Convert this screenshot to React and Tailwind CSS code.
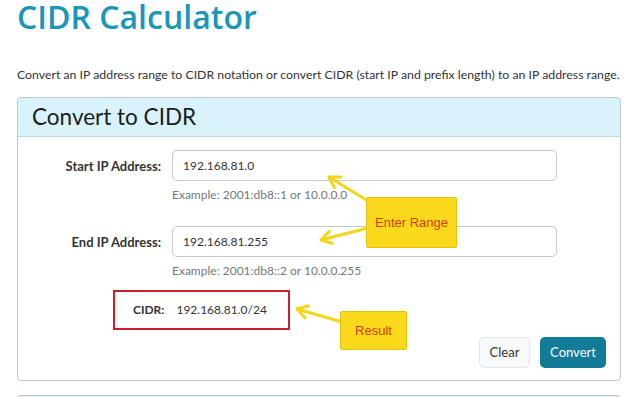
import React from "react";

const body = { fontFamily: 'Lato, "Open Sans", sans-serif' };
const heading = { fontFamily: '"Open Sans", "Noto Sans", sans-serif' };
const annot = { fontFamily: '"Liberation Sans", Arial, sans-serif' };

function Arrow({ x1, y1, x2, y2 }) {
  // arrow head at (x2, y2)
  const ang = Math.atan2(y1 - y2, x1 - x2);
  const len = 12;
  const spread = 0.55;
  const a = [x2 + len * Math.cos(ang + spread), y2 + len * Math.sin(ang + spread)];
  const b = [x2 + len * Math.cos(ang - spread), y2 + len * Math.sin(ang - spread)];
  return (
    <g stroke="#f2d61c" strokeWidth="3" fill="none" strokeLinecap="round" strokeLinejoin="round">
      <line x1={x1} y1={y1} x2={x2} y2={y2} />
      <polyline points={`${a[0]},${a[1]} ${x2},${y2} ${b[0]},${b[1]}`} />
    </g>
  );
}

function Field({ label, value, example }) {
  return (
    <div className="flex items-start">
      <label className="w-[154px] shrink-0 pr-[11px] pt-[7px] text-right text-[13px] font-bold text-[#333]">
        {label}
      </label>
      <div>
        <div className="flex h-[31px] w-[385px] items-center rounded-[5px] border border-[#c8c8c8] bg-white px-[10px] text-[12px] text-[#333]">
          {value}
        </div>
        <p className="mt-[5px] text-[12px] leading-[18px] text-[#777]">{example}</p>
      </div>
    </div>
  );
}

export default function App() {
  return (
    <div className="relative h-[397px] w-[640px] overflow-hidden bg-white" style={body}>
      <div className="pl-[17px]">
        {/* title */}
        <h1 className="mt-[1px] text-[32px] font-semibold leading-[32px] text-[#1a96b9]" style={heading}>
          CIDR Calculator
        </h1>
        <p className="mt-[33px] text-[12.3px] leading-[18px] text-[#333] whitespace-nowrap">
          Convert an IP address range to CIDR notation or convert CIDR (start IP and prefix length) to an IP address range.
        </p>

        {/* card */}
        <div className="mt-[13px] w-[604px] rounded-[4px] border border-[#c6c6c6]">
          <div className="flex h-[39px] items-center rounded-t-[4px] border-b border-[#b9dbe5] bg-[#d8f3fb] px-[14px]">
            <h2 className="text-[22.5px] leading-none text-[#1d1d1d]">Convert to CIDR</h2>
          </div>
          <div className="pt-[13px] pb-[12px]">
            <Field label="Start IP Address:" value="192.168.81.0" example="Example: 2001:db8::1 or 10.0.0.0" />
            <div className="mt-[22px]">
              <Field label="End IP Address:" value="192.168.81.255" example="Example: 2001:db8::2 or 10.0.0.255" />
            </div>
            <div className="mt-[10px] ml-[95px] flex h-[40px] w-[177px] items-center border-2 border-[#c8202f] pl-[18px] text-[12px]">
              <span className="font-bold text-[#333]">CIDR:</span>
              <span className="ml-[12px] text-[#333]">192.168.81.0/24</span>
            </div>
            <div className="mt-[7px] flex justify-end gap-[10px] pr-[14px]">
              <button className="h-[31px] w-[51px] rounded-[5px] border border-[#e3e6ea] bg-[#f7f9fa] text-[13px] text-[#333]">
                Clear
              </button>
              <button className="h-[31px] w-[66px] rounded-[5px] bg-[#117b98] text-[13px] text-white">
                Convert
              </button>
            </div>
          </div>
        </div>

        {/* next card top */}
        <div className="mt-[14px] h-[10px] w-[604px] rounded-t-[4px] border border-[#c6c6c6] bg-[#d8f3fb]" />
      </div>

      {/* annotations */}
      <svg className="pointer-events-none absolute left-0 top-0" width="640" height="397">
        <Arrow x1={368} y1={201} x2={329} y2={177} />
        <Arrow x1={368} y1={228} x2={321} y2={240} />
        <Arrow x1={342} y1={322} x2={297} y2={309} />
      </svg>
      <div
        className="absolute left-[366px] top-[197px] flex h-[51px] w-[91px] items-center justify-center rounded-[2px] border border-[#e2c40e] bg-[#fad91c] text-[13px] text-[#d0400a]"
        style={annot}
      >
        Enter Range
      </div>
      <div
        className="absolute left-[340px] top-[311px] flex h-[39px] w-[67px] items-center justify-center rounded-[2px] border border-[#e2c40e] bg-[#fad91c] text-[13px] text-[#d0400a]"
        style={annot}
      >
        Result
      </div>
    </div>
  );
}
